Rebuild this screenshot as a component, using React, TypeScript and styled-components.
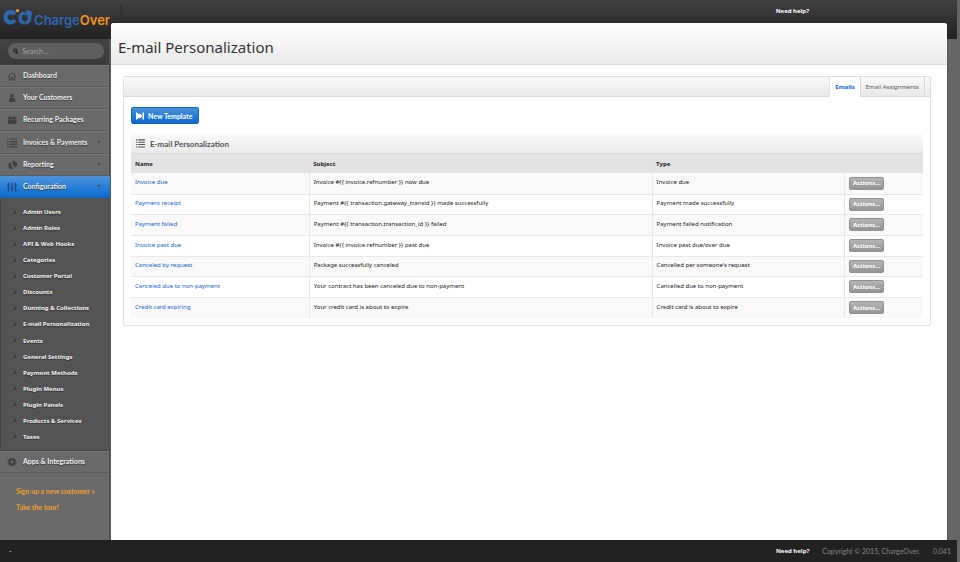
import React from "react";
import styled, { createGlobalStyle, css } from "styled-components";

const SIDEBAR = "110px";

const smallText = css`
  font-family: "Noto Sans", "Open Sans", sans-serif;
  font-size: 6px;
  line-height: 10px;
`;

const GlobalStyle = createGlobalStyle`
  *, *::before { box-sizing: border-box; }
  html, body, #root { height: 100%; }
  body {
    margin: 0;
    background: #666;
    color: #222;
    font-family: Lato, "Noto Sans", sans-serif;
    font-size: 7px;
    line-height: 10px;
  }
  a { color: inherit; text-decoration: none; }
  ul { list-style: none; margin: 0; padding: 0; }
  button, input { font: inherit; }
`;

const Page = styled.div`
  min-height: 100%;
  display: grid;
  grid-template-rows: auto 1fr auto;
`;

const Header = styled.header`
  height: 39px;
  margin-right: 3px;
  display: flex;
  align-items: flex-start;
  background: linear-gradient(#414141, #222);
  border-bottom: 1px solid #292425;
`;

const Logo = styled.a`
  width: ${SIDEBAR};
  padding: 8px 0 0 2px;
  display: flex;
  gap: 1px;
  font: 600 13px/24px Inter, "Liberation Sans", sans-serif;
  color: #2f68b2;
  white-space: nowrap;
`;

const LogoAccent = styled.span`
  color: #f7941d;
`;

const HeaderDivider = styled.span`
  width: 2px;
  height: 11px;
  margin: 5px auto 0 10px;
  background: #303030;
`;

const HelpLink = styled.a`
  ${smallText}
  color: #fff;
  font-weight: bold;
`;

const HeaderHelp = styled(HelpLink)`
  margin: 6px 148px 0 0;
`;

const Body = styled.div`
  display: grid;
  grid-template-columns: ${SIDEBAR} 1fr;
  gap: 1px;
`;

const Sidebar = styled.aside`
  background: #6a6a6a;
  border-right: 1px solid #555;
`;

const SearchBar = styled.form`
  height: 26px;
  padding: 4px 5px 6px 8px;
  background: linear-gradient(#444, #3a3a3a);
`;

const SearchField = styled.label`
  height: 16px;
  padding: 0 5px;
  display: flex;
  align-items: center;
  gap: 4px;
  border-radius: 8px;
  background: #5f5f5f;
  color: #222;
`;

const SearchInput = styled.input`
  width: 100%;
  min-width: 0;
  padding: 0;
  border: 0;
  outline: 0;
  background: none;
  color: #ddd;
  &::placeholder { color: #a6a6a6; opacity: 1; }
`;

const NavList = styled.ul<{ $height: number }>`
  min-height: ${(p) => p.$height}px;
  display: grid;
  grid-auto-rows: 1fr;
`;

const NavLink = styled.a<{ $active?: boolean }>`
  height: 100%;
  padding: 0 8px 2px 7px;
  display: grid;
  grid-template-columns: 10px 1fr auto;
  align-items: center;
  column-gap: 6px;
  color: #f2f2f2;
  font-weight: bold;
  text-shadow: 0 1px 1px #333;
  white-space: nowrap;
  border-top: 1px solid #777;
  border-bottom: 1px solid #5b5b5b;
  ${(p) =>
    p.$active &&
    css`
      margin-right: -1px;
      padding-right: 9px;
      background: linear-gradient(#4a93dd, #0a6ccf);
      border-color: #4a90d8 transparent #0b66c0;
    `}
`;

const NavIcon = styled.svg`
  width: 10px;
  height: 10px;
  margin-top: 2px;
  color: #404040;
`;

const Caret = styled.span`
  border: 2px solid transparent;
  border-top-color: #484848;
  border-bottom: 0;
`;

const SubList = styled(NavList)`
  padding: 6px 0 5px;
  background: #545454;
  border-left: 1px solid #484848;
  border-bottom: 1px solid #484848;
`;

const SubLink = styled.a`
  ${smallText}
  height: 100%;
  padding-left: 12px;
  display: flex;
  align-items: center;
  gap: 7px;
  color: #f2f2f2;
  font-weight: bold;
  text-shadow: 0 1px 1px #2c2c2c;
  white-space: nowrap;
  &::before {
    content: "";
    width: 3px;
    height: 3px;
    border: 1px solid #404040;
  }
`;

const Promo = styled.div`
  padding: 10px 0 20px 16px;
  display: grid;
  line-height: 16px;
  font-weight: bold;
  color: #f19d2e;
`;

const Card = styled.main`
  margin: -16px 13px 0 0;
  position: relative;
  background: #fff;
  border-radius: 3px 3px 0 0;
  box-shadow: 0 0 2px #333;
`;

const Title = styled.h1`
  margin: 0;
  height: 42px;
  padding: 7px 7px 0;
  display: flex;
  align-items: center;
  font-family: "Noto Sans", "Open Sans", sans-serif;
  font-size: 15px;
  line-height: 20px;
  font-weight: normal;
  color: #333;
  border-radius: 3px 3px 0 0;
  border-bottom: 1px solid #ddd;
  background: linear-gradient(#fff, #ebebeb);
`;

const Panel = styled.section`
  margin: 11px 16px 0 12px;
  border: 1px solid #e0e0e0;
  border-radius: 2px;
`;

const Tabs = styled.nav`
  height: 20px;
  padding-right: 5px;
  display: flex;
  justify-content: flex-end;
  background: linear-gradient(#fafafa, #e8e8e8);
  box-shadow: inset 0 -1px #ddd;
`;

const Tab = styled.a<{ $active?: boolean }>`
  ${smallText}
  padding: 0 5px;
  display: flex;
  align-items: center;
  color: #555;
  border-right: 1px solid #d8d8d8;
  ${(p) =>
    p.$active &&
    css`
      background: #fff;
      color: #0b67cd;
      font-weight: bold;
      border-left: 1px solid #e4e4e4;
    `}
`;

const PanelBody = styled.div`
  padding: 10px 7px 7px;
`;

const PrimaryButton = styled.button`
  height: 17px;
  padding: 0 6px 0 4px;
  display: flex;
  align-items: center;
  gap: 4px;
  border: 1px solid #1768b8;
  border-radius: 2px;
  background: linear-gradient(#4792dc, #0a69cc);
  color: #fff;
  font-weight: bold;
`;

const TableTitle = styled.h2`
  margin: 10px 0 0;
  height: 20px;
  padding: 0 5px;
  display: flex;
  align-items: center;
  gap: 5px;
  font-size: 8px;
  line-height: 10px;
  color: #555;
  background: linear-gradient(#fafafa, #e9e9e9);
  border-bottom: 1px solid #ddd;
`;

const Table = styled.table`
  ${smallText}
  width: 100%;
  table-layout: fixed;
  border-collapse: collapse;
  text-align: left;
`;

const Col = styled.col<{ $w: number }>`
  width: ${(p) => p.$w}%;
`;

const HeadCell = styled.th`
  height: 19px;
  padding: 0 4px;
  background: #e3e3e3;
`;

const Row = styled.tr`
  height: 21px;
  &:nth-child(3n + 2) { height: 20px; }
  &:nth-child(odd) { background: #f9f9f9; }
  & + & { border-top: 1px solid #e8e8e8; }
`;

const Cell = styled.td`
  padding: 0 4px 2px;
  & + & { border-left: 1px solid #e8e8e8; }
`;

const ActionCell = styled(Cell)`
  padding: 0 4px;
`;

const RowLink = styled.a`
  color: #1765cc;
`;

const ActionButton = styled.button`
  display: block;
  width: 35px;
  height: 13px;
  padding: 0;
  border: 1px solid #919191;
  border-radius: 2px;
  background: linear-gradient(#b4b4b4, #959595);
  color: #fff;
  font-weight: bold;
  line-height: 10px;
`;

const Footer = styled.footer`
  height: 22px;
  margin-right: 3px;
  padding: 0 6px 0 9px;
  display: flex;
  align-items: center;
  gap: 13px;
  position: relative;
  background: #222;
  color: #888;
`;

const FooterMark = styled.span`
  margin-right: auto;
  color: #ddd;
`;

function LogoMark() {
  return (
    <svg width="32" height="18" viewBox="0 0 32 18" fill="none" aria-hidden="true">
      <path d="M13.200 6.200A5.300 5.300 0 1 0 13.200 12.200" stroke="#2f68b2" strokeWidth="4.400" />
      <circle cx="23.500" cy="10" r="5" stroke="#2f68b2" strokeWidth="3.600" />
      <path d="M25 6.500L25.500 1.500L31 3.500L30.500 8z" fill="#2f68b2" />
      <path d="M22.500 2.200l2.800 4.600M24.500 17.500L23.500 13.500M23.500 13.500l3.500-3.500" stroke="#2c2c2c" strokeWidth=".8" />
      <circle cx="16" cy="2.400" r="1.700" fill="#f7941d" />
    </svg>
  );
}

function ListGlyph() {
  return <path d="M0 1h1.500M2.500 1H10M0 3.600h1.500M2.500 3.600H10M0 6.200h1.500M2.500 6.200H10M0 8.800h1.500M2.500 8.800H10" stroke="currentColor" strokeWidth="1.200" />;
}

const glyphs: Record<string, React.ReactNode> = {
  home: <path d="M1.300 5.400L5 1.800l3.700 3.600M2.300 4.800V9h1.900V6.500h1.600V9h1.900V4.800M7.500 2v1.800" fill="none" stroke="currentColor" />,
  user: <path d="M5 .8a1.900 2.100 0 0 1 1 3.900c2 .3 2.500 1 2.500 2.500V9H2V7.200c0-1.500.5-2.200 2-2.500A1.900 2.100 0 0 1 5 .8z" fill="currentColor" />,
  box: <path d="M1 2.500h1.200V1.300h1.500v1.200h2.600V1.300h1.500v1.200H9.500v2H.800v-2zM1 5h8.500v4H1z" fill="currentColor" />,
  list: <ListGlyph />,
  pie: (
    <>
      <path d="M4 2.500A3.300 3.300 0 1 0 6.300 8.500L4 5.700z" fill="currentColor" />
      <path d="M5.300.800A4 4 0 0 1 8.600 7.800L5.300 4.500z" fill="currentColor" />
    </>
  ),
  sliders: <path d="M1.500.500v9M5 .500v9M8.500.500v9M.300 3h2.400M3.800 6.500h2.400M7.300 3.500h2.400" fill="none" stroke="#164a80" strokeWidth="1.300" />,
  gear: (
    <g fill="none" stroke="currentColor">
      <circle cx="5" cy="5" r="2.500" strokeWidth="2" />
      <circle cx="5" cy="5" r="3.900" strokeWidth="1.300" strokeDasharray="1.600 1.463" />
    </g>
  ),
};

function Icon({ name }: { name: string }) {
  return <NavIcon viewBox="0 0 10 10" aria-hidden="true">{glyphs[name]}</NavIcon>;
}

type NavEntry = { icon: string; label: string; menu?: boolean; active?: boolean };

const mainNav: NavEntry[] = [
  { icon: "home", label: "Dashboard" },
  { icon: "user", label: "Your Customers" },
  { icon: "box", label: "Recurring Packages" },
  { icon: "list", label: "Invoices & Payments", menu: true },
  { icon: "pie", label: "Reporting", menu: true },
  { icon: "sliders", label: "Configuration", menu: true, active: true },
];

const subNav = [
  "Admin Users", "Admin Roles", "API & Web Hooks", "Categories", "Customer Portal",
  "Discounts", "Dunning & Collections", "E-mail Personalization", "Events",
  "General Settings", "Payment Methods", "Plugin Menus", "Plugin Panels",
  "Products & Services", "Taxes",
];

const rows = [
  ["Invoice due", "Invoice #{{ invoice.refnumber }} now due", "Invoice due"],
  ["Payment receipt", "Payment #{{ transaction.gateway_transid }} made successfully", "Payment made successfully"],
  ["Payment failed", "Payment #{{ transaction.transaction_id }} failed", "Payment failed notification"],
  ["Invoice past due", "Invoice #{{ invoice.refnumber }} past due", "Invoice past due/over due"],
  ["Canceled by request", "Package successfully canceled", "Cancelled per someone's request"],
  ["Canceled due to non-payment", "Your contract has been canceled due to non-payment", "Cancelled due to non-payment"],
  ["Credit card expiring", "Your credit card is about to expire", "Credit card is about to expire"],
];

function NavItem({ entry }: { entry: NavEntry }) {
  return (
    <li>
      <NavLink href="#" $active={entry.active}>
        <Icon name={entry.icon} />
        {entry.label}
        {entry.menu && <Caret />}
      </NavLink>
    </li>
  );
}

export default function App() {
  return (
    <>
      <GlobalStyle />
      <Page>
        <Header>
          <Logo href="#">
            <LogoMark />
            <span>Charge<LogoAccent>Over</LogoAccent></span>
          </Logo>
          <HeaderDivider />
          <HeaderHelp href="#">Need help?</HeaderHelp>
        </Header>
        <Body>
          <Sidebar>
            <SearchBar>
              <SearchField>
                <svg width="6" height="7" viewBox="0 0 6 7" fill="none" stroke="currentColor" aria-hidden="true">
                  <circle cx="2.500" cy="2.500" r="1.700" strokeWidth="1.200" />
                  <path d="M3.600 3.900l1.700 2.300" strokeWidth="1.600" />
                </svg>
                <SearchInput type="text" aria-label="Search" placeholder="Search..." />
              </SearchField>
            </SearchBar>
            <NavList $height={133}>
              {mainNav.map((n) => <NavItem key={n.label} entry={n} />)}
            </NavList>
            <SubList $height={253}>
              {subNav.map((label) => (
                <li key={label}><SubLink href="#">{label}</SubLink></li>
              ))}
            </SubList>
            <NavList $height={22}>
              <NavItem entry={{ icon: "gear", label: "Apps & Integrations" }} />
            </NavList>
            <Promo>
              <a href="#">Sign up a new customer »</a>
              <a href="#">Take the tour!</a>
            </Promo>
          </Sidebar>
          <Card>
            <Title>E-mail Personalization</Title>
            <Panel>
              <Tabs>
                <Tab href="#" $active>Emails</Tab>
                <Tab href="#">Email Assignments</Tab>
              </Tabs>
              <PanelBody>
                <PrimaryButton type="button">
                  <svg width="8" height="8" viewBox="0 0 8 8" fill="currentColor" aria-hidden="true">
                    <path d="M0 0l5.500 4L0 8zM3.500 1l3 3-3 3zM6.500.5H8v7H6.500z" />
                  </svg>
                  New Template
                </PrimaryButton>
                <TableTitle>
                  <svg width="9" height="9" viewBox="0 0 10 10" aria-hidden="true"><ListGlyph /></svg>
                  E-mail Personalization
                </TableTitle>
                <Table>
                  <colgroup>
                    <Col $w={22.5} />
                    <Col $w={43.3} />
                    <Col $w={24.3} />
                    <Col $w={9.9} />
                  </colgroup>
                  <thead>
                    <tr>
                      <HeadCell>Name</HeadCell>
                      <HeadCell>Subject</HeadCell>
                      <HeadCell>Type</HeadCell>
                      <HeadCell aria-label="Actions" />
                    </tr>
                  </thead>
                  <tbody>
                    {rows.map(([name, subject, type]) => (
                      <Row key={name}>
                        <Cell><RowLink href="#">{name}</RowLink></Cell>
                        <Cell>{subject}</Cell>
                        <Cell>{type}</Cell>
                        <ActionCell><ActionButton type="button">Actions...</ActionButton></ActionCell>
                      </Row>
                    ))}
                  </tbody>
                </Table>
              </PanelBody>
            </Panel>
          </Card>
        </Body>
        <Footer>
          <FooterMark>-</FooterMark>
          <HelpLink href="#">Need help?</HelpLink>
          <span>Copyright © 2015, ChargeOver.</span>
          <span>0.041</span>
        </Footer>
      </Page>
    </>
  );
}
